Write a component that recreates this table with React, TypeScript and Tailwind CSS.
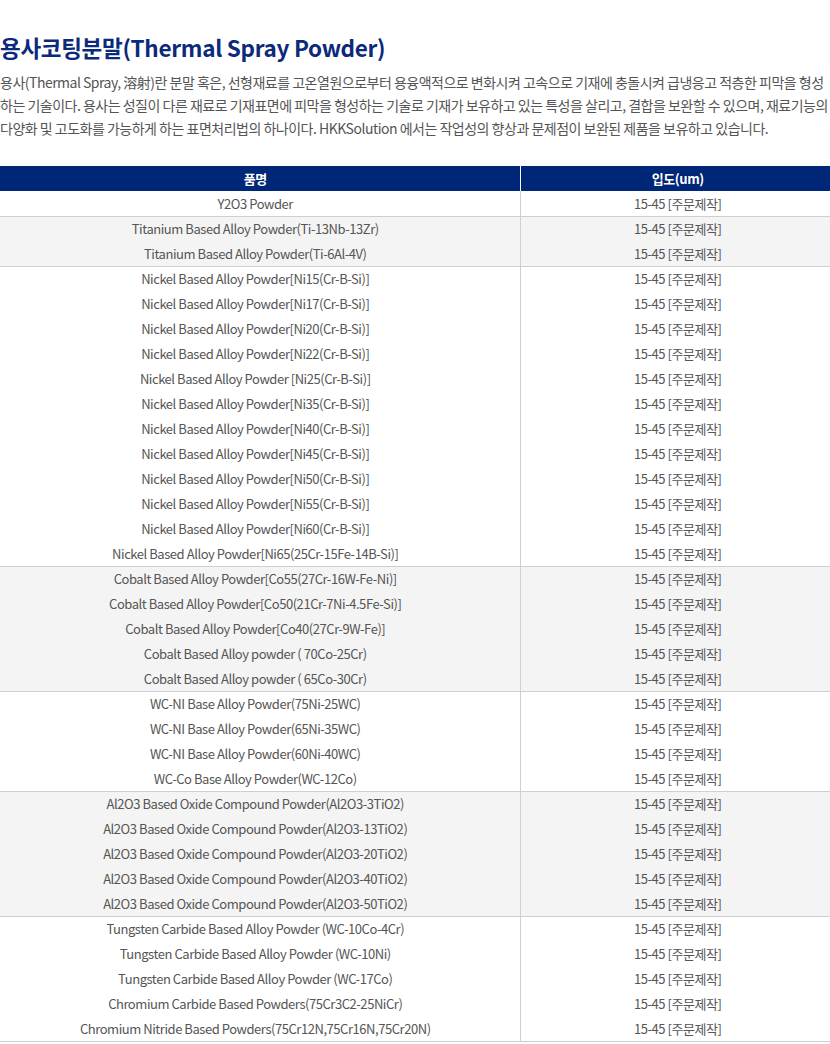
import React from "react";

const size = "15-45 [주문제작]";

const groups: string[][] = [
  ["Y2O3 Powder"],
  [
    "Titanium Based Alloy Powder(Ti-13Nb-13Zr)",
    "Titanium Based Alloy Powder(Ti-6Al-4V)",
  ],
  [
    "Nickel Based Alloy Powder[Ni15(Cr-B-Si)]",
    "Nickel Based Alloy Powder[Ni17(Cr-B-Si)]",
    "Nickel Based Alloy Powder[Ni20(Cr-B-Si)]",
    "Nickel Based Alloy Powder[Ni22(Cr-B-Si)]",
    "Nickel Based Alloy Powder [Ni25(Cr-B-Si)]",
    "Nickel Based Alloy Powder[Ni35(Cr-B-Si)]",
    "Nickel Based Alloy Powder[Ni40(Cr-B-Si)]",
    "Nickel Based Alloy Powder[Ni45(Cr-B-Si)]",
    "Nickel Based Alloy Powder[Ni50(Cr-B-Si)]",
    "Nickel Based Alloy Powder[Ni55(Cr-B-Si)]",
    "Nickel Based Alloy Powder[Ni60(Cr-B-Si)]",
    "Nickel Based Alloy Powder[Ni65(25Cr-15Fe-14B-Si)]",
  ],
  [
    "Cobalt Based Alloy Powder[Co55(27Cr-16W-Fe-Ni)]",
    "Cobalt Based Alloy Powder[Co50(21Cr-7Ni-4.5Fe-Si)]",
    "Cobalt Based Alloy Powder[Co40(27Cr-9W-Fe)]",
    "Cobalt Based Alloy powder ( 70Co-25Cr)",
    "Cobalt Based Alloy powder ( 65Co-30Cr)",
  ],
  [
    "WC-NI Base Alloy Powder(75Ni-25WC)",
    "WC-NI Base Alloy Powder(65Ni-35WC)",
    "WC-NI Base Alloy Powder(60Ni-40WC)",
    "WC-Co Base Alloy Powder(WC-12Co)",
  ],
  [
    "Al2O3 Based Oxide Compound Powder(Al2O3-3TiO2)",
    "Al2O3 Based Oxide Compound Powder(Al2O3-13TiO2)",
    "Al2O3 Based Oxide Compound Powder(Al2O3-20TiO2)",
    "Al2O3 Based Oxide Compound Powder(Al2O3-40TiO2)",
    "Al2O3 Based Oxide Compound Powder(Al2O3-50TiO2)",
  ],
  [
    "Tungsten Carbide Based Alloy Powder (WC-10Co-4Cr)",
    "Tungsten Carbide Based Alloy Powder (WC-10Ni)",
    "Tungsten Carbide Based Alloy Powder (WC-17Co)",
    "Chromium Carbide Based Powders(75Cr3C2-25NiCr)",
    "Chromium Nitride Based Powders(75Cr12N,75Cr16N,75Cr20N)",
  ],
];

export default function App() {
  return (
    <div className="w-[830px] bg-white pt-[33px] font-['Noto_Sans_CJK_KR','Noto_Sans',sans-serif]">
      {/* Title + intro */}
      <h1 className="text-[22.5px] font-bold leading-[29px] tracking-[-0.3px] text-[#0b2a7b]">
        용사코팅분말(Thermal Spray Powder)
      </h1>
      <p className="mt-[9px] text-[14px] leading-[23px] tracking-[-0.5px] text-[#555]">
        용사(Thermal Spray, 溶射)란 분말 혹은, 선형재료를 고온열원으로부터 용융액적으로 변화시켜 고속으로 기재에 충돌시켜 급냉응고 적층한 피막을 형성
        <br />
        하는 기술이다. 용사는 성질이 다른 재료로 기재표면에 피막을 형성하는 기술로 기재가 보유하고 있는 특성을 살리고, 결합을 보완할 수 있으며, 재료기능의
        <br />
        다양화 및 고도화를 가능하게 하는 표면처리법의 하나이다. HKKSolution 에서는 작업성의 향상과 문제점이 보완된 제품을 보유하고 있습니다.
      </p>

      {/* Product table */}
      <table className="mt-[26px] w-full border-collapse text-[13px] tracking-[-0.45px]">
        <thead>
          <tr className="h-[25px] bg-[#002677] text-white">
            <th className="w-[520px] border-r border-white pr-[9px] font-bold">품명</th>
            <th className="pl-[5px] font-bold">입도(um)</th>
          </tr>
        </thead>
        {groups.map((rows, g) => (
          <tbody
            key={g}
            className={`border-b border-[#cfcfcf] ${g % 2 === 1 ? "bg-[#f4f4f4]" : "bg-white"}`}
          >
            {rows.map((name) => (
              <tr key={name} className="h-[25px] text-[#555]">
                <td className="border-r border-[#cfcfcf] pr-[9px] text-center">{name}</td>
                <td className="pl-[5px] text-center">{size}</td>
              </tr>
            ))}
          </tbody>
        ))}
      </table>
    </div>
  );
}
